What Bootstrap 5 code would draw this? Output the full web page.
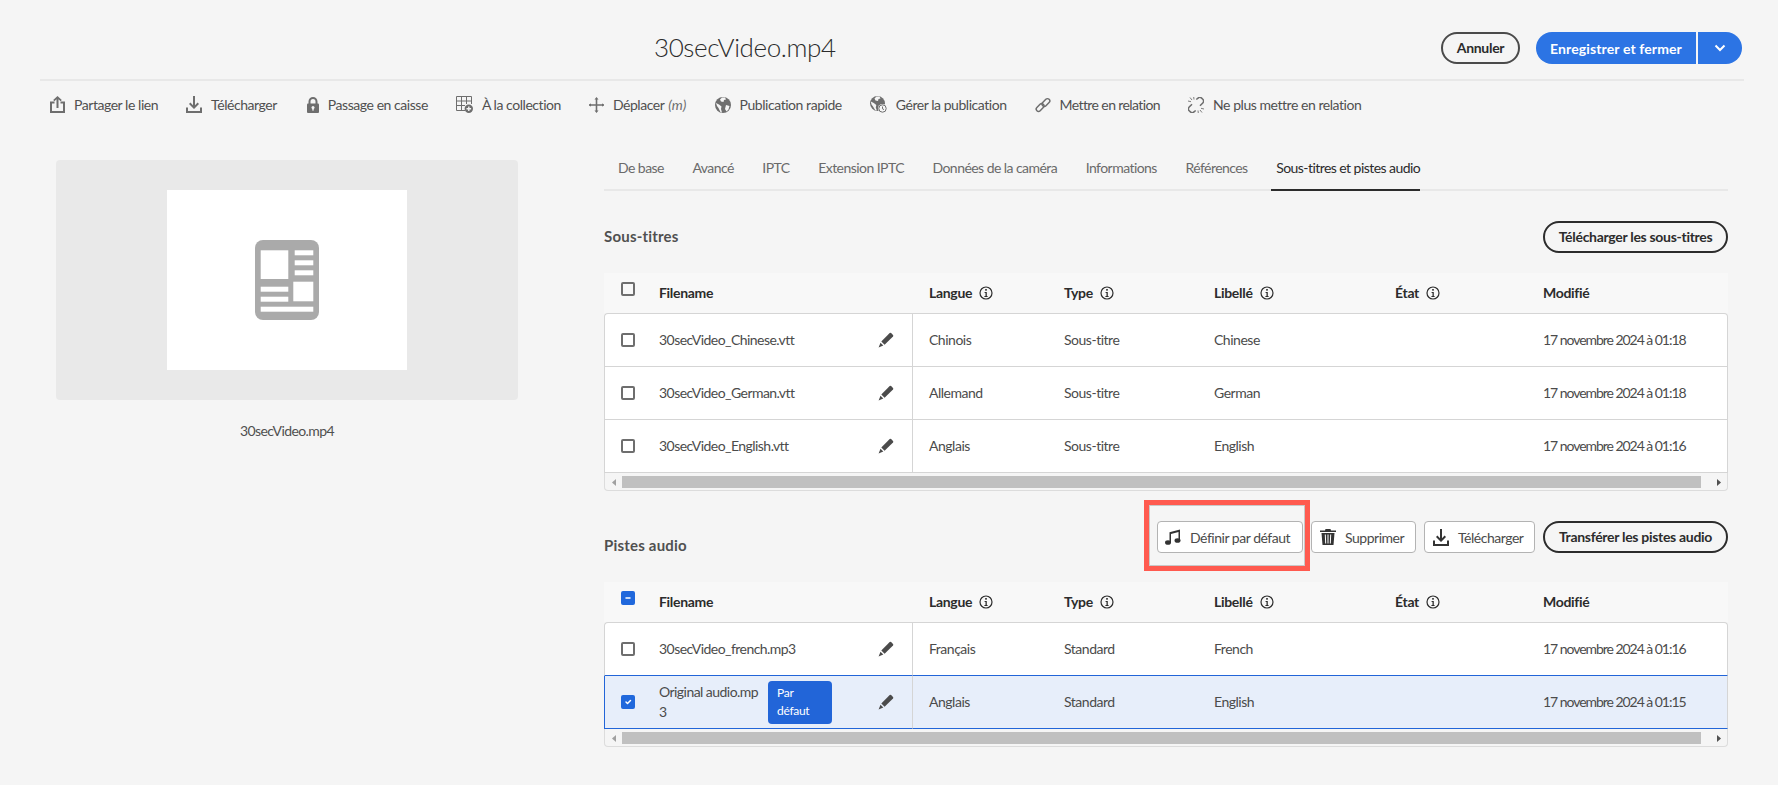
<!DOCTYPE html>
<html lang="fr">
<head>
<meta charset="UTF-8">
<meta name="viewport" content="width=device-width, initial-scale=1">
<title>30secVideo.mp4 - Propriétés</title>
<link rel="stylesheet" href="https://cdn.jsdelivr.net/npm/bootstrap@5.3.0/dist/css/bootstrap.min.css">
<style>
body { background: #f5f5f5; color: #505050; font-family: Lato, "Liberation Sans", sans-serif; font-size: 14px; line-height: 20px; letter-spacing: -.48px; }
svg { flex: none; display: block; }
.ico-dark { color: #4b4b4b; }
.ico-black { color: #333; }
.ico-grey { color: #6e6e6e; }
.ico-white { color: #fff; }

.top-head { margin: 0 34px 0 40px; height: 81px; border-bottom: 2px solid #e8e8e8; padding: 32px 2px 0 0; }
.doc-title { margin: -2px 0 0 614px; font-size: 26px; line-height: 34px; font-weight: 300; color: #2c2c2c; letter-spacing: -.4px; }
.pill-btn { height: 32px; padding: 0 14px; border: 2px solid #2c2c2c; border-radius: 16px; background: transparent; color: #2c2c2c; font-size: 14px; font-weight: 700; line-height: 28px; letter-spacing: -.3px; white-space: nowrap; }
.pill-btn:hover { background: #e8e8e8; border-color: #2c2c2c; color: #2c2c2c; }
.pill-wide { width: 185px; padding: 0; }
.pill-grey { width: 79px; padding: 0; border-color: #4b4b4b; }
.save-main, .save-more { height: 32px; border: 0; background: #2c74e4; color: #fff; font-weight: 700; font-size: 14px; letter-spacing: .12px; padding: 0; }
.save-main { width: 160px; border-radius: 16px 0 0 16px; }
.save-more { width: 44px; border-radius: 0 16px 16px 0; margin-left: 2px; }

.tool-bar { height: 47px; margin-bottom: 2px; padding-left: 50px; gap: 28px; }
.tool-item { gap: 9px; color: #505050; text-decoration: none; white-space: nowrap; letter-spacing: -.45px; }
.tool-item em { color: #6e6e6e; letter-spacing: .1px; margin-left: 1px; }
.tool-lock { margin-left: 2px; }
.tool-tight { letter-spacing: -.6px; }

.side-col { width: 462px; margin: 30px 86px 0 56px; }
.thumb-box { height: 240px; background: #e9e9e9; border-radius: 4px; }
.thumb-inner { width: 240px; height: 180px; background: #fff; }
.thumb-name { margin-top: 21px; text-align: center; letter-spacing: -.6px; }
.main-col { width: 1124px; margin-top: 28px; }

.tab-bar { gap: 28.5px; padding-left: 14px; border-bottom: 2px solid #e8e8e8; height: 33px; }
.tab-bar .nav-link { padding: 0; height: 33px; color: #6a6a6a; letter-spacing: -.55px; }
.tab-bar .nav-link.active { color: #2c2c2c; margin-left: -5px; padding-left: 5px; border-bottom: 2px solid #2c2c2c; }

.sec-head { margin-top: 30px; height: 32px; }
.sec-label { font-size: 15px; font-weight: 700; color: #505050; letter-spacing: .2px; margin: -2px 0 0; line-height: 20px; }
.sec-label-low { align-self: flex-end; margin-bottom: -2px; }
.tool-btn { height: 32px; padding: 0 0 0 8px; gap: 9px; background: #fff; border: 1px solid #b3b3b3; border-radius: 4px; color: #4b4b4b; font-size: 14px; letter-spacing: -.48px; white-space: nowrap; }
.tool-btn:hover { background: #f8f8f8; border-color: #8e8e8e; }
.btn-def { width: 146px; padding-left: 7px; }
.btn-del { width: 105px; }
.btn-dl { width: 111px; }
.hl-wrap { position: relative; margin-right: 8px; }
.hl-frame { position: absolute; left: -13px; top: -21px; width: 166px; height: 71px; border: 5px solid #ff5a4f; outline: 1px solid #c8c8c8; outline-offset: -6px; pointer-events: none; }

.file-table { margin: 20px 0 0; width: 1124px; table-layout: fixed; border-collapse: separate; border-spacing: 0; --bs-table-bg: transparent; }
.table-audio { margin-top: 29px; }
.file-table col:nth-child(1) { width: 46px; }
.file-table col:nth-child(2) { width: 263px; }
.file-table col:nth-child(3) { width: 134px; }
.file-table col:nth-child(4) { width: 150px; }
.file-table col:nth-child(5) { width: 181px; }
.file-table col:nth-child(6) { width: 148px; }
.file-table col:nth-child(7) { width: 202px; }
.file-table th { height: 40px; padding: 0 0 0 17px; background: #f8f8f8; color: #2c2c2c; font-weight: 700; border: 0; vertical-align: middle; letter-spacing: -.3px; }
.file-table th.cb-col { vertical-align: top; padding: 9px 0 0 17px; }
.file-table th.name-col { padding-left: 9px; }
.head-inner { gap: 7px; }
.file-table td { height: 53px; padding: 0 0 0 17px; background: #fff; color: #4b4b4b; border: 0; border-bottom: 1px solid #d5d5d5; vertical-align: middle; }
.file-table th:nth-child(3), .file-table td:nth-child(3) { padding-left: 16px; }
.file-table td.name-col { padding: 0 18px 0 9px; border-right: 1px solid #d5d5d5; letter-spacing: -.55px; }
.file-table td.cb-col { border-left: 1px solid #d5d5d5; padding-left: 16px; }
.file-table td:last-child { border-right: 1px solid #d5d5d5; letter-spacing: -1.04px; }
.file-table tbody tr:first-child td { border-top: 1px solid #d5d5d5; height: 54px; }
.file-table tbody tr:first-child td:first-child { border-top-left-radius: 4px; }
.file-table tbody tr:first-child td:last-child { border-top-right-radius: 4px; }
.file-table .sel-row td { background: #e7eefa; border-bottom-color: #2265d8; }
.file-table .sel-row td:first-child { border-left-color: #2265d8; }
.file-table tr:has(+ .sel-row) td { border-bottom-color: #2265d8; }

.form-check-input.box-input { width: 14px; height: 14px; margin: 0; display: block; background-color: transparent; border: 2px solid #6e6e6e; border-radius: 2px; }
td .form-check-input.box-input { background-color: #fff; }
.form-check-input.box-input:checked, .form-check-input.box-input:indeterminate { background-color: #2068dc; border-color: #2068dc; }

.def-tag { flex: none; width: 64px; margin-left: 9px; padding: 3px 9px 4px; background: #2265d8; border-radius: 4px; color: #fff; font-size: 12px; line-height: 18px; letter-spacing: -.3px; }
.wrap-name { flex: none; width: 100px; }

.fake-scroll { height: 18px; background: #f5f5f5; border: 1px solid #dcdcdc; border-top: 0; border-radius: 0 0 4px 4px; padding: 3px 0 2px; }
.scroll-arrow { width: 17px; font-size: 0; }
.scroll-arrow svg { margin: 3px auto 0; }
.scroll-thumb { flex: 1; margin-right: 9px; background: #c0c0c0; }
</style>
</head>
<body>

<svg width="0" height="0" class="position-absolute">
  <symbol id="ico-download" viewBox="0 0 16 17">
    <path d="M7 0h2v9.200l2.600-2.600 1.400 1.400-5 5-5-5 1.400-1.400L7 9.200z" fill="currentColor"/>
    <path d="M0 11.500h2V15h12v-3.500h2V17H0z" fill="currentColor"/>
  </symbol>
  <symbol id="ico-info" viewBox="0 0 14 14">
    <circle cx="7" cy="7" r="6" fill="none" stroke="currentColor" stroke-width="1.200"/>
    <rect x="6.200" y="3" width="1.600" height="1.700" fill="currentColor"/>
    <path d="M5.600 6h2.200v4h.8v1H5.400v-1h1.100V7H5.600z" fill="currentColor"/>
  </symbol>
  <symbol id="ico-edit" viewBox="0 0 16 16">
    <path d="M3.300 9.500 11.700 1.100a1 1 0 0 1 1.400 0L15 3a1 1 0 0 1 0 1.400L6.600 12.800z" fill="currentColor"/>
    <path d="M2.500 10.800 5.300 13.600 .6 15.500z" fill="currentColor"/>
  </symbol>
  <symbol id="ico-chev" viewBox="0 0 12 8">
    <path d="M1.500 1.500 6 6l4.500-4.500" fill="none" stroke="currentColor" stroke-width="2"/>
  </symbol>
</svg>

<header class="top-head d-flex justify-content-between align-items-start">
  <h1 class="doc-title">30secVideo.mp4</h1>
  <div class="d-flex gap-3">
    <button class="btn pill-btn pill-grey">Annuler</button>
    <div class="d-flex">
      <button class="btn save-main">Enregistrer et fermer</button>
      <button class="btn save-more d-flex align-items-center justify-content-center"><svg class="ico-white" width="12" height="8"><use href="#ico-chev"/></svg></button>
    </div>
  </div>
</header>

<nav class="tool-bar d-flex align-items-center">
  <a href="#" class="tool-item d-flex align-items-center">
    <svg width="15" height="17" viewBox="0 0 15 17"><path d="M6.500 3.200 4.400 5.300 3.200 4.100 7.500 0l4.300 4.100-1.200 1.200-2.100-2.100V12h-2z" fill="#6e6e6e"/><path d="M4.500 6.500H1v9.500h13V6.500h-3.500" fill="none" stroke="#6e6e6e" stroke-width="2"/></svg>
    Partager le lien
  </a>
  <a href="#" class="tool-item d-flex align-items-center">
    <svg class="ico-grey" width="16" height="17"><use href="#ico-download"/></svg>
    Télécharger
  </a>
  <a href="#" class="tool-item tool-lock d-flex align-items-center">
    <svg width="12" height="16" viewBox="0 0 12 16"><path d="M2.500 7V4.500a3.500 3.500 0 0 1 7 0V7" fill="none" stroke="#6e6e6e" stroke-width="2"/><rect y="6.500" width="12" height="9.500" rx="1" fill="#6e6e6e"/><circle cx="6" cy="10.600" r="1.500" fill="#f5f5f5"/><rect x="5.300" y="11" width="1.400" height="2.600" fill="#f5f5f5"/></svg>
    Passage en caisse
  </a>
  <a href="#" class="tool-item d-flex align-items-center">
    <svg width="17" height="17" viewBox="0 0 17 17"><path d="M9 14.500H.5V.5h15V8M.5 5h15M.5 9.500H9M5.500.5v14M10.500.5V8" fill="none" stroke="#6e6e6e"/><circle cx="12.800" cy="12.800" r="4.200" fill="#6e6e6e"/><path d="M12.100 10.500h1.400v1.600h1.600v1.400h-1.600v1.600h-1.400v-1.600h-1.600v-1.400h1.600z" fill="#f5f5f5"/></svg>
    À la collection
  </a>
  <a href="#" class="tool-item d-flex align-items-center">
    <svg width="15" height="16" viewBox="0 0 15 16"><path d="M6.700 2h1.600v5.200H15v1.600H8.300V14H6.700V8.800H0V7.200h6.700z" fill="#6e6e6e"/><path d="M7.500 0 9.500 2.400h-4zM7.500 16l2-2.400h-4zM0 8l2-1.800v3.600zM15 8l-2-1.800v3.600z" fill="#6e6e6e"/></svg>
    <span>Déplacer <em>(m)</em></span>
  </a>
  <a href="#" class="tool-item d-flex align-items-center">
    <svg width="16" height="16" viewBox="0 0 16 16"><circle cx="8" cy="8" r="8" fill="#6e6e6e"/><path d="M7 .5 5 2.500l1 2 2.500.5L9 3l2-.5L10 .5zM1 6l3 1.500 2.500 2-.5 2.500 1 3.500-1.500-.2L3.500 11 2 9zM11 8l3.500 1-1 3.500-2 2L10 12z" fill="#f5f5f5"/></svg>
    Publication rapide
  </a>
  <a href="#" class="tool-item d-flex align-items-center">
    <svg width="17" height="17" viewBox="0 0 17 17"><circle cx="7.500" cy="7.500" r="7.500" fill="#6e6e6e"/><path d="M6.500.5l-2 2 1 2 2.500.5.5-2 2-.5L9.500 .5zM.8 5.500l3 1.500 2.500 2-.5 2.500 1 3-1.500-.2-2.300-3.800L1.500 8.500z" fill="#f5f5f5"/><circle cx="12.500" cy="12.500" r="4.500" fill="#f5f5f5"/><circle cx="12.500" cy="12.500" r="3.700" fill="none" stroke="#6e6e6e"/><path d="M12.500 10.500v2.300l1.500.8" fill="none" stroke="#6e6e6e"/></svg>
    Gérer la publication
  </a>
  <a href="#" class="tool-item tool-tight d-flex align-items-center">
    <svg width="16" height="16" viewBox="0 0 16 16"><g fill="none" stroke="#6e6e6e" stroke-width="1.500"><rect x="8.600" y="1" width="4.600" height="9" rx="2.300" transform="rotate(45 10.900 5.500)"/><rect x="2.800" y="6" width="4.600" height="9" rx="2.300" transform="rotate(45 5.100 10.500)"/></g></svg>
    Mettre en relation
  </a>
  <a href="#" class="tool-item d-flex align-items-center">
    <svg width="16" height="16" viewBox="0 0 16 16"><g fill="none" stroke="#6e6e6e" stroke-width="1.500"><path d="M8.300 2.500 10 1.100a2.600 2.600 0 0 1 3.600 0l1.200 1.200a2.600 2.600 0 0 1 0 3.600L12 8.800"/><path d="M7.700 13.500 6 14.900a2.600 2.600 0 0 1-3.600 0L1.200 13.700a2.600 2.600 0 0 1 0-3.600L4 7.200"/></g><path d="M2 .5 4 3M0 4l3 .7M5.700 0l.3 2.500M14 15.500 12 13M16 12l-3-.7M10.300 16 10 13.500" fill="none" stroke="#7e7e7e"/></svg>
    Ne plus mettre en relation
  </a>
</nav>

<main class="d-flex align-items-start">
  <aside class="side-col">
    <div class="thumb-box d-flex align-items-center justify-content-center">
      <div class="thumb-inner d-flex align-items-center justify-content-center">
        <svg width="64" height="80" viewBox="0 0 64 80">
          <rect width="64" height="80" rx="8" fill="#aaa"/>
          <g fill="#fff">
            <rect x="5.700" y="10.300" width="27.600" height="28.700"/>
            <rect x="39.700" y="10.300" width="18.600" height="5"/>
            <rect x="39.700" y="20.300" width="18.600" height="5"/>
            <rect x="39.700" y="30.300" width="18.600" height="5"/>
            <rect x="38.300" y="41.700" width="20" height="19.600"/>
            <rect x="5.700" y="46.700" width="27.600" height="5"/>
            <rect x="5.700" y="56.700" width="27.600" height="5"/>
            <rect x="5.700" y="66.700" width="52.600" height="5"/>
          </g>
        </svg>
      </div>
    </div>
    <div class="thumb-name">30secVideo.mp4</div>
  </aside>

  <section class="main-col">
    <ul class="nav tab-bar">
      <li class="nav-item"><a class="nav-link" href="#">De base</a></li>
      <li class="nav-item"><a class="nav-link" href="#">Avancé</a></li>
      <li class="nav-item"><a class="nav-link" href="#">IPTC</a></li>
      <li class="nav-item"><a class="nav-link" href="#">Extension IPTC</a></li>
      <li class="nav-item"><a class="nav-link" href="#">Données de la caméra</a></li>
      <li class="nav-item"><a class="nav-link" href="#">Informations</a></li>
      <li class="nav-item"><a class="nav-link" href="#">Références</a></li>
      <li class="nav-item"><a class="nav-link active" href="#">Sous-titres et pistes audio</a></li>
    </ul>

    <div class="sec-head d-flex justify-content-between align-items-center">
      <h2 class="sec-label">Sous-titres</h2>
      <button class="btn pill-btn pill-wide">Télécharger les sous-titres</button>
    </div>

    <table class="table file-table">
      <colgroup><col><col><col><col><col><col><col></colgroup>
      <thead>
        <tr>
          <th class="cb-col"><input class="form-check-input box-input" type="checkbox" aria-label="Tout"></th>
          <th class="name-col">Filename</th>
          <th><span class="head-inner d-flex align-items-center">Langue <svg width="14" height="14"><use href="#ico-info"/></svg></span></th>
          <th><span class="head-inner d-flex align-items-center">Type <svg width="14" height="14"><use href="#ico-info"/></svg></span></th>
          <th><span class="head-inner d-flex align-items-center">Libellé <svg width="14" height="14"><use href="#ico-info"/></svg></span></th>
          <th><span class="head-inner d-flex align-items-center">État <svg width="14" height="14"><use href="#ico-info"/></svg></span></th>
          <th>Modifié</th>
        </tr>
      </thead>
      <tbody>
        <tr>
          <td class="cb-col"><input class="form-check-input box-input" type="checkbox" aria-label="Choisir"></td>
          <td class="name-col"><div class="d-flex align-items-center justify-content-between">30secVideo_Chinese.vtt <svg class="ico-dark" width="16" height="16"><use href="#ico-edit"/></svg></div></td>
          <td>Chinois</td><td>Sous-titre</td><td>Chinese</td><td></td><td>17 novembre 2024 à 01:18</td>
        </tr>
        <tr>
          <td class="cb-col"><input class="form-check-input box-input" type="checkbox" aria-label="Choisir"></td>
          <td class="name-col"><div class="d-flex align-items-center justify-content-between">30secVideo_German.vtt <svg class="ico-dark" width="16" height="16"><use href="#ico-edit"/></svg></div></td>
          <td>Allemand</td><td>Sous-titre</td><td>German</td><td></td><td>17 novembre 2024 à 01:18</td>
        </tr>
        <tr>
          <td class="cb-col"><input class="form-check-input box-input" type="checkbox" aria-label="Choisir"></td>
          <td class="name-col"><div class="d-flex align-items-center justify-content-between">30secVideo_English.vtt <svg class="ico-dark" width="16" height="16"><use href="#ico-edit"/></svg></div></td>
          <td>Anglais</td><td>Sous-titre</td><td>English</td><td></td><td>17 novembre 2024 à 01:16</td>
        </tr>
      </tbody>
    </table>
    <div class="fake-scroll d-flex">
      <div class="scroll-arrow"><svg width="4" height="7"><path d="M4 0v7L0 3.500z" fill="#a0a0a0"/></svg></div>
      <div class="scroll-thumb"></div>
      <div class="scroll-arrow"><svg width="4" height="7"><path d="M0 0v7l4-3.500z" fill="#505050"/></svg></div>
    </div>

    <div class="sec-head d-flex justify-content-between align-items-center">
      <h2 class="sec-label sec-label-low">Pistes audio</h2>
      <div class="d-flex">
        <div class="hl-wrap">
          <button class="btn tool-btn btn-def d-flex align-items-center">
            <svg width="16" height="16" viewBox="0 0 16 16"><path d="M4.500 3.200 15 .5v11h-1.500V3L6 4.900V13.500H4.500z" fill="#333"/><ellipse cx="3" cy="13.500" rx="3" ry="2.300" fill="#333"/><ellipse cx="12.500" cy="11.500" rx="3" ry="2.300" fill="#333"/></svg>
            Définir par défaut
          </button>
          <div class="hl-frame"></div>
        </div>
        <button class="btn tool-btn btn-del d-flex align-items-center me-2">
          <svg width="16" height="16" viewBox="0 0 16 16"><path d="M5.500 0h5l.5 1.500h5V3H0V1.500h5z" fill="#333"/><path d="M1.500 4h13l-1 12h-11z" fill="#333"/><path d="M4.800 5.500h1l.4 9h-1zM7.500 5.500h1v9h-1zM10.200 5.500h1l-.4 9h-1z" fill="#fff"/></svg>
          Supprimer
        </button>
        <button class="btn tool-btn btn-dl d-flex align-items-center me-2">
          <svg class="ico-black" width="16" height="17"><use href="#ico-download"/></svg>
          Télécharger
        </button>
        <button class="btn pill-btn pill-wide">Transférer les pistes audio</button>
      </div>
    </div>

    <table class="table file-table table-audio">
      <colgroup><col><col><col><col><col><col><col></colgroup>
      <thead>
        <tr>
          <th class="cb-col"><input id="allAudio" class="form-check-input box-input" type="checkbox" aria-label="Tout"></th>
          <th class="name-col">Filename</th>
          <th><span class="head-inner d-flex align-items-center">Langue <svg width="14" height="14"><use href="#ico-info"/></svg></span></th>
          <th><span class="head-inner d-flex align-items-center">Type <svg width="14" height="14"><use href="#ico-info"/></svg></span></th>
          <th><span class="head-inner d-flex align-items-center">Libellé <svg width="14" height="14"><use href="#ico-info"/></svg></span></th>
          <th><span class="head-inner d-flex align-items-center">État <svg width="14" height="14"><use href="#ico-info"/></svg></span></th>
          <th>Modifié</th>
        </tr>
      </thead>
      <tbody>
        <tr>
          <td class="cb-col"><input class="form-check-input box-input" type="checkbox" aria-label="Choisir"></td>
          <td class="name-col"><div class="d-flex align-items-center justify-content-between">30secVideo_french.mp3 <svg class="ico-dark" width="16" height="16"><use href="#ico-edit"/></svg></div></td>
          <td>Français</td><td>Standard</td><td>French</td><td></td><td>17 novembre 2024 à 01:16</td>
        </tr>
        <tr class="sel-row">
          <td class="cb-col"><input class="form-check-input box-input" type="checkbox" checked aria-label="Choisir"></td>
          <td class="name-col"><div class="d-flex align-items-center"><span class="wrap-name">Original audio.mp<br>3</span><span class="def-tag">Par défaut</span><svg class="ms-auto ico-dark" width="16" height="16"><use href="#ico-edit"/></svg></div></td>
          <td>Anglais</td><td>Standard</td><td>English</td><td></td><td>17 novembre 2024 à 01:15</td>
        </tr>
      </tbody>
    </table>
    <div class="fake-scroll d-flex">
      <div class="scroll-arrow"><svg width="4" height="7"><path d="M4 0v7L0 3.500z" fill="#a0a0a0"/></svg></div>
      <div class="scroll-thumb"></div>
      <div class="scroll-arrow"><svg width="4" height="7"><path d="M0 0v7l4-3.500z" fill="#505050"/></svg></div>
    </div>
  </section>
</main>

<script>
document.getElementById('allAudio').indeterminate = true;
</script>
</body>
</html>
